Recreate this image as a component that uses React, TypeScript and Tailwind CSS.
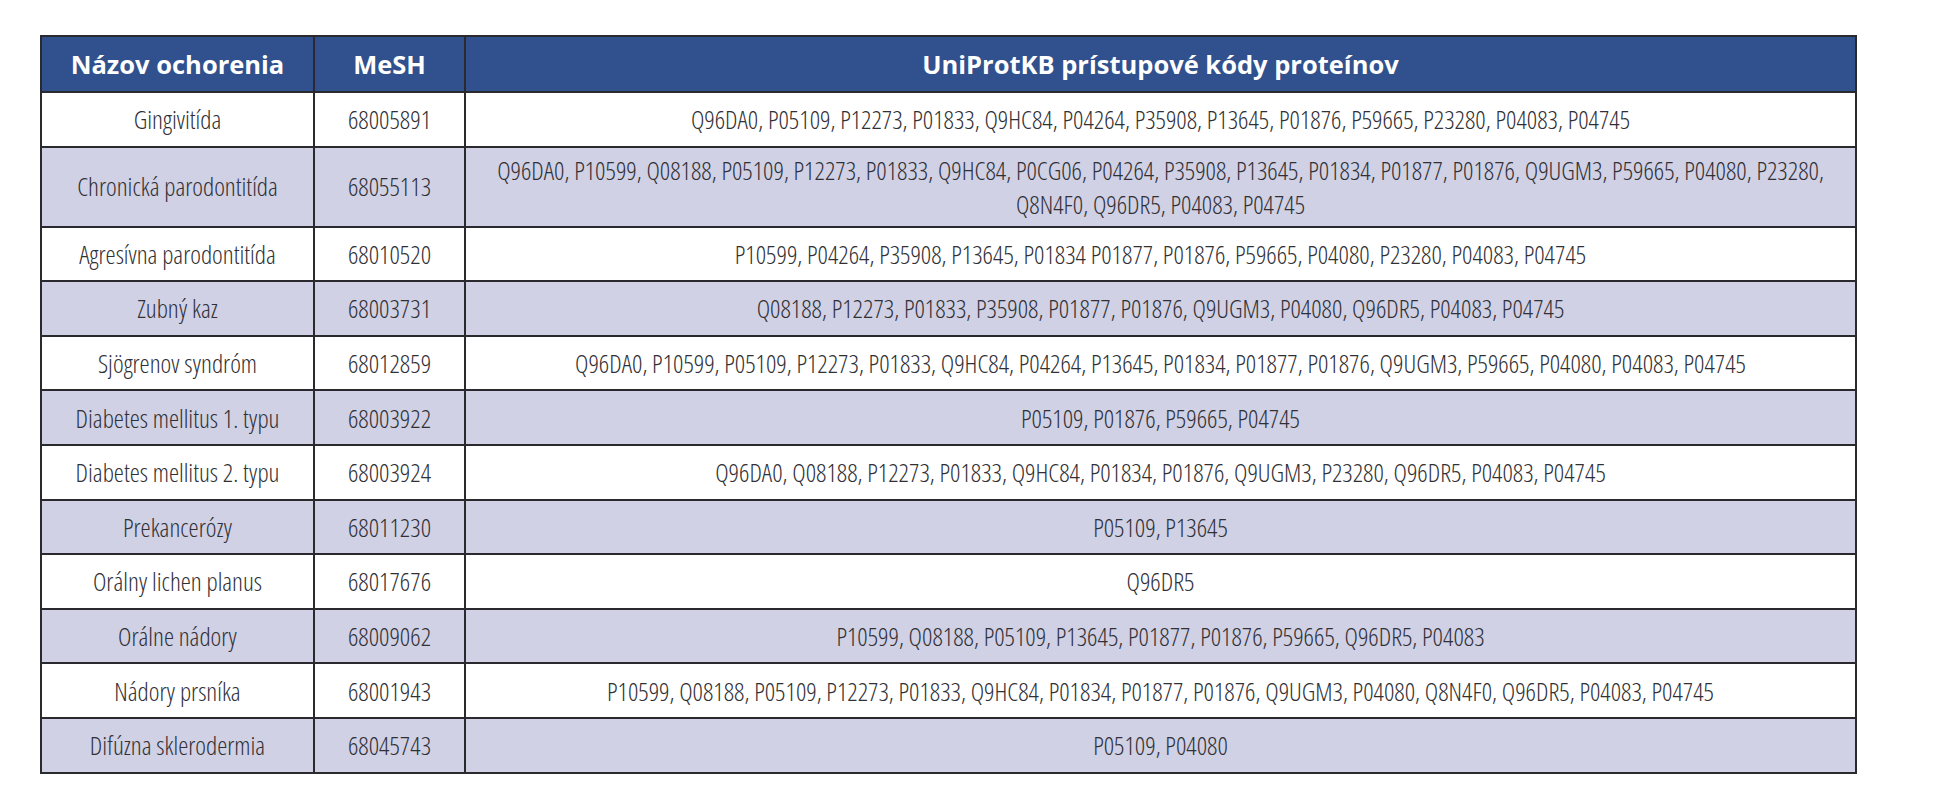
import React from "react"

type Row = { name: string; mesh: string; codes: string }

const rows: Row[] = [
  { name: "Gingivitída", mesh: "68005891", codes: "Q96DA0, P05109, P12273, P01833, Q9HC84, P04264, P35908, P13645, P01876, P59665, P23280, P04083, P04745" },
  { name: "Chronická parodontitída", mesh: "68055113", codes: "Q96DA0, P10599, Q08188, P05109, P12273, P01833, Q9HC84, P0CG06, P04264, P35908, P13645, P01834, P01877, P01876, Q9UGM3, P59665, P04080, P23280, Q8N4F0, Q96DR5, P04083, P04745" },
  { name: "Agresívna parodontitída", mesh: "68010520", codes: "P10599, P04264, P35908, P13645, P01834 P01877, P01876, P59665, P04080, P23280, P04083, P04745" },
  { name: "Zubný kaz", mesh: "68003731", codes: "Q08188, P12273, P01833, P35908, P01877, P01876, Q9UGM3, P04080, Q96DR5, P04083, P04745" },
  { name: "Sjögrenov syndróm", mesh: "68012859", codes: "Q96DA0, P10599, P05109, P12273, P01833, Q9HC84, P04264, P13645, P01834, P01877, P01876, Q9UGM3, P59665, P04080, P04083, P04745" },
  { name: "Diabetes mellitus 1. typu", mesh: "68003922", codes: "P05109, P01876, P59665, P04745" },
  { name: "Diabetes mellitus 2. typu", mesh: "68003924", codes: "Q96DA0, Q08188, P12273, P01833, Q9HC84, P01834, P01876, Q9UGM3, P23280, Q96DR5, P04083, P04745" },
  { name: "Prekancerózy", mesh: "68011230", codes: "P05109, P13645" },
  { name: "Orálny lichen planus", mesh: "68017676", codes: "Q96DR5" },
  { name: "Orálne nádory", mesh: "68009062", codes: "P10599, Q08188, P05109, P13645, P01877, P01876, P59665, Q96DR5, P04083" },
  { name: "Nádory prsníka", mesh: "68001943", codes: "P10599, Q08188, P05109, P12273, P01833, Q9HC84, P01834, P01877, P01876, Q9UGM3, P04080, Q8N4F0, Q96DR5, P04083, P04745" },
  { name: "Difúzna sklerodermia", mesh: "68045743", codes: "P05109, P04080" },
]

export default function App() {
  return (
    <div className="min-h-[800px] w-[1940px] bg-white pl-[40px] pt-[35px] font-['Open_Sans',sans-serif]">
      <table className="w-[1817px] table-fixed border-collapse border-2 border-[#2a2a2e]">
        <colgroup>
          <col className="w-[273px]" />
          <col className="w-[151px]" />
          <col />
        </colgroup>
        <thead>
          <tr className="h-[56px] bg-[#30508e] text-[25.5px] font-bold text-white">
            <th className="border-2 border-[#2a2a2e]">Názov ochorenia</th>
            <th className="border-2 border-[#2a2a2e]">MeSH</th>
            <th className="border-2 border-[#2a2a2e]">UniProtKB prístupové kódy proteínov</th>
          </tr>
        </thead>
        <tbody className="text-[25.5px] font-light text-[#303035] font-stretch-condensed">
          {rows.map((r, i) => (
            <tr key={r.mesh} className={i % 2 === 1 ? "h-[54.6px] bg-[#d0d1e5]" : "h-[54.6px] bg-white"}>
              <td className="border-2 border-[#2a2a2e] px-2 text-center">{r.name}</td>
              <td className="border-2 border-[#2a2a2e] px-2 text-center">{r.mesh}</td>
              <td className="border-2 border-[#2a2a2e] px-5 py-[5px] text-center leading-[34px]">{r.codes}</td>
            </tr>
          ))}
        </tbody>
      </table>
    </div>
  )
}
